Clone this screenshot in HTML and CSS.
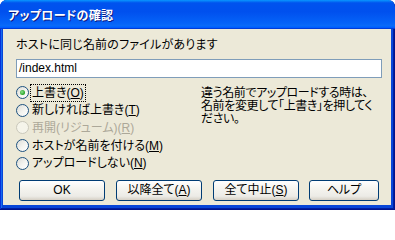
FILE: index.html
```html
<!DOCTYPE html>
<html lang="ja">
<head>
<meta charset="utf-8">
<title>アップロードの確認</title>
<link rel="stylesheet" href="styles.css">
</head>
<body>
<div class="window">
  <div class="titlebar"><span class="title">アップロードの確認</span></div>
  <div class="content">
    <div class="prompt">ホストに同じ名前のファイルがあります</div>
    <div class="field">/index.html</div>
    <div class="options">
      <div class="radios">
        <div class="row"><span class="radio checked"><span class="dot"></span></span><span class="label focus">上書き(<u>O</u>)</span></div>
        <div class="row"><span class="radio"></span><span class="label">新しければ上書き(<u>T</u>)</span></div>
        <div class="row disabled"><span class="radio"></span><span class="label">再開(リジューム)(<u>R</u>)</span></div>
        <div class="row"><span class="radio"></span><span class="label">ホストが名前を付ける(<u>M</u>)</span></div>
        <div class="row"><span class="radio"></span><span class="label">アップロードしない(<u>N</u>)</span></div>
      </div>
      <div class="note">違う名前でアップロードする時は、<br>名前を変更して「上書き」を押してく<br>ださい。</div>
    </div>
    <div class="buttons">
      <button class="btn">OK</button>
      <button class="btn">以降全て(<u>A</u>)</button>
      <button class="btn">全て中止(<u>S</u>)</button>
      <button class="btn help">ヘルプ</button>
    </div>
  </div>
</div>
</body>
</html>
```
FILE: styles.css
```css
* { box-sizing: border-box; }
html, body {
  margin: 0;
  padding: 0;
  background: #ffffff;
}
body {
  width: 395px;
  height: 210px;
  overflow: hidden;
  font-family: "Liberation Sans", "Noto Sans CJK JP", sans-serif;
  font-size: 12px;
  color: #000;
}
.window {
  width: 395px;
  height: 210px;
  display: flex;
  flex-direction: column;
  background: #0846d8;
  border-radius: 7px 7px 0 0;
  padding: 0 4px 5px 3px;
  box-shadow: inset -1px -1px #00138c, inset 1px 0 #0831d9, inset -2px -2px #001ea0, inset 2px 0 #166aee;
}
.titlebar {
  height: 29px;
  margin: 0 -4px 0 -3px;
  border-radius: 7px 7px 0 0;
  background: linear-gradient(180deg, #0997ff, #0053ee 10%, #0050ee 40%, #0563f8 80%, #0a6af8 88%, #0066ff 92%, #005bff 95%, #003dd7 97%, #003dd7);
  display: flex;
  align-items: center;
  padding: 0 0 1px 8px;
}
.title {
  color: #fff;
  font-weight: bold;
  font-size: 12px;
  font-family: "Noto Sans CJK JP", sans-serif;
  font-feature-settings: "palt";
  letter-spacing: 0.3px;
  text-shadow: 1px 1px #0a1883;
}
.content {
  flex: 1;
  background: #ece9d8;
  padding: 9px 0 0 13px;
  display: flex;
  flex-direction: column;
}
.prompt {
  line-height: 14px;
  font-feature-settings: "palt";
  letter-spacing: 0.2px;
}
.field {
  margin-top: 7px;
  width: 366px;
  height: 19px;
  background: #fff;
  border: 1px solid #7f9db9;
  line-height: 16px;
  padding-left: 2px;
}
.options {
  margin-top: 6px;
  display: flex;
}
.radios {
  width: 185px;
  display: flex;
  flex-direction: column;
}
.row {
  height: 17.6px;
  display: flex;
  align-items: center;
  gap: 2px;
}
.radio {
  width: 13px;
  height: 13px;
  border-radius: 50%;
  border: 1px solid #1c5180;
  background: linear-gradient(135deg, #dcdcd7 0%, #f4f4f0 55%, #ffffff 100%);
  display: flex;
  align-items: center;
  justify-content: center;
  flex: none;
}
.dot {
  width: 5px;
  height: 5px;
  border-radius: 50%;
  background: radial-gradient(circle at 40% 40%, #8ee08e, #21a121 70%);
}
.label {
  padding: 1px 1px 1px 1px;
  line-height: 14px;
  font-feature-settings: "palt";
  border: 1px solid transparent;
  margin-left: -1px;
}
.label.focus {
  border: 1px dotted #000;
}
.disabled .radio {
  border-color: #cac8bb;
  background: #f5f4ea;
}
.disabled .label {
  color: #aca899;
}
.note {
  margin-top: 3px;
  line-height: 13px;
  white-space: nowrap;
  font-feature-settings: "palt";
  letter-spacing: -0.4px;
}
.buttons {
  margin-top: 8px;
  padding-left: 3px;
  display: flex;
  gap: 11px;
}
.btn {
  width: 86px;
  height: 21px;
  border: 1px solid #003c74;
  border-radius: 3px;
  background: linear-gradient(180deg, #ffffff 0%, #f5f4ef 40%, #ecebe6 80%, #d6d0c5 100%);
  font-family: "Liberation Sans", "Noto Sans CJK JP", sans-serif;
  font-size: 12px;
  color: #000;
  padding: 0;
  line-height: 17px;
  font-feature-settings: "palt";
}
.btn.help {
  width: 70px;
  margin-left: -1px;
}
```
